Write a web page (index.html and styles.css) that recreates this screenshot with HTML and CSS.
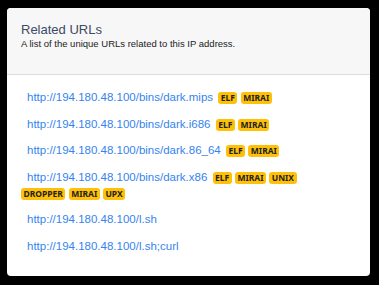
FILE: index.html
```html
<!DOCTYPE html>
<html lang="en">
<head>
  <meta charset="UTF-8">
  <title>Related URLs</title>
  <link rel="stylesheet" href="styles.css">
</head>
<body>
  <div class="card">
    <div class="card-header">
      <h2>Related URLs</h2>
      <p>A list of the unique URLs related to this IP address.</p>
    </div>
    <ul class="url-list">
      <li><a href="#">http://194.180.48.100/bins/dark.mips</a> <span class="tag">ELF</span> <span class="tag">MIRAI</span></li>
      <li><a href="#">http://194.180.48.100/bins/dark.i686</a> <span class="tag">ELF</span> <span class="tag">MIRAI</span></li>
      <li><a href="#">http://194.180.48.100/bins/dark.86_64</a> <span class="tag">ELF</span> <span class="tag">MIRAI</span></li>
      <li><a href="#">http://194.180.48.100/bins/dark.x86</a> <span class="tag">ELF</span> <span class="tag">MIRAI</span> <span class="tag">UNIX</span> <span class="tag">DROPPER</span> <span class="tag">MIRAI</span> <span class="tag">UPX</span></li>
      <li><a href="#">http://194.180.48.100/l.sh</a></li>
      <li><a href="#">http://194.180.48.100/l.sh;curl</a></li>
    </ul>
  </div>
</body>
</html>
```

FILE: styles.css
```css
body {
  margin: 0;
  padding: 8px 9px 9px 7px;
  background-color: #000;
  font-family: "Liberation Sans", Arial, sans-serif;
  color: #333;
}
.card {
  background-color: #fff;
  border-radius: 4px;
  overflow: hidden;
  height: 268px;
}
.card-header {
  background-color: #f7f7f7;
  border-bottom: 1px solid #dedede;
  padding: 14px 14px 0;
  height: 52px;
}
h2 {
  margin: 0;
  font-size: 13px;
  font-weight: normal;
  line-height: 16px;
  color: #3c4a66;
}
.card-header p {
  margin: 0;
  font-size: 9.5px;
  line-height: 12px;
  color: #222;
}
.url-list {
  list-style: none;
  margin: 0;
  padding: 14px 40px 0 14px;
}
.url-list li {
  line-height: 16px;
  margin-bottom: 10.5px;
  font-size: 11.5px;
}
.url-list a {
  color: #3584ee;
  text-decoration: none;
  margin-left: 6px;
  margin-right: 2px;
}
.tag {
  display: inline-block;
  background-color: #ffc107;
  color: #222;
  font-family: "Noto Sans", sans-serif;
  font-size: 8.5px;
  font-weight: bold;
  line-height: 12px;
  padding: 0 2.5px;
  border-radius: 3px;
}
```
